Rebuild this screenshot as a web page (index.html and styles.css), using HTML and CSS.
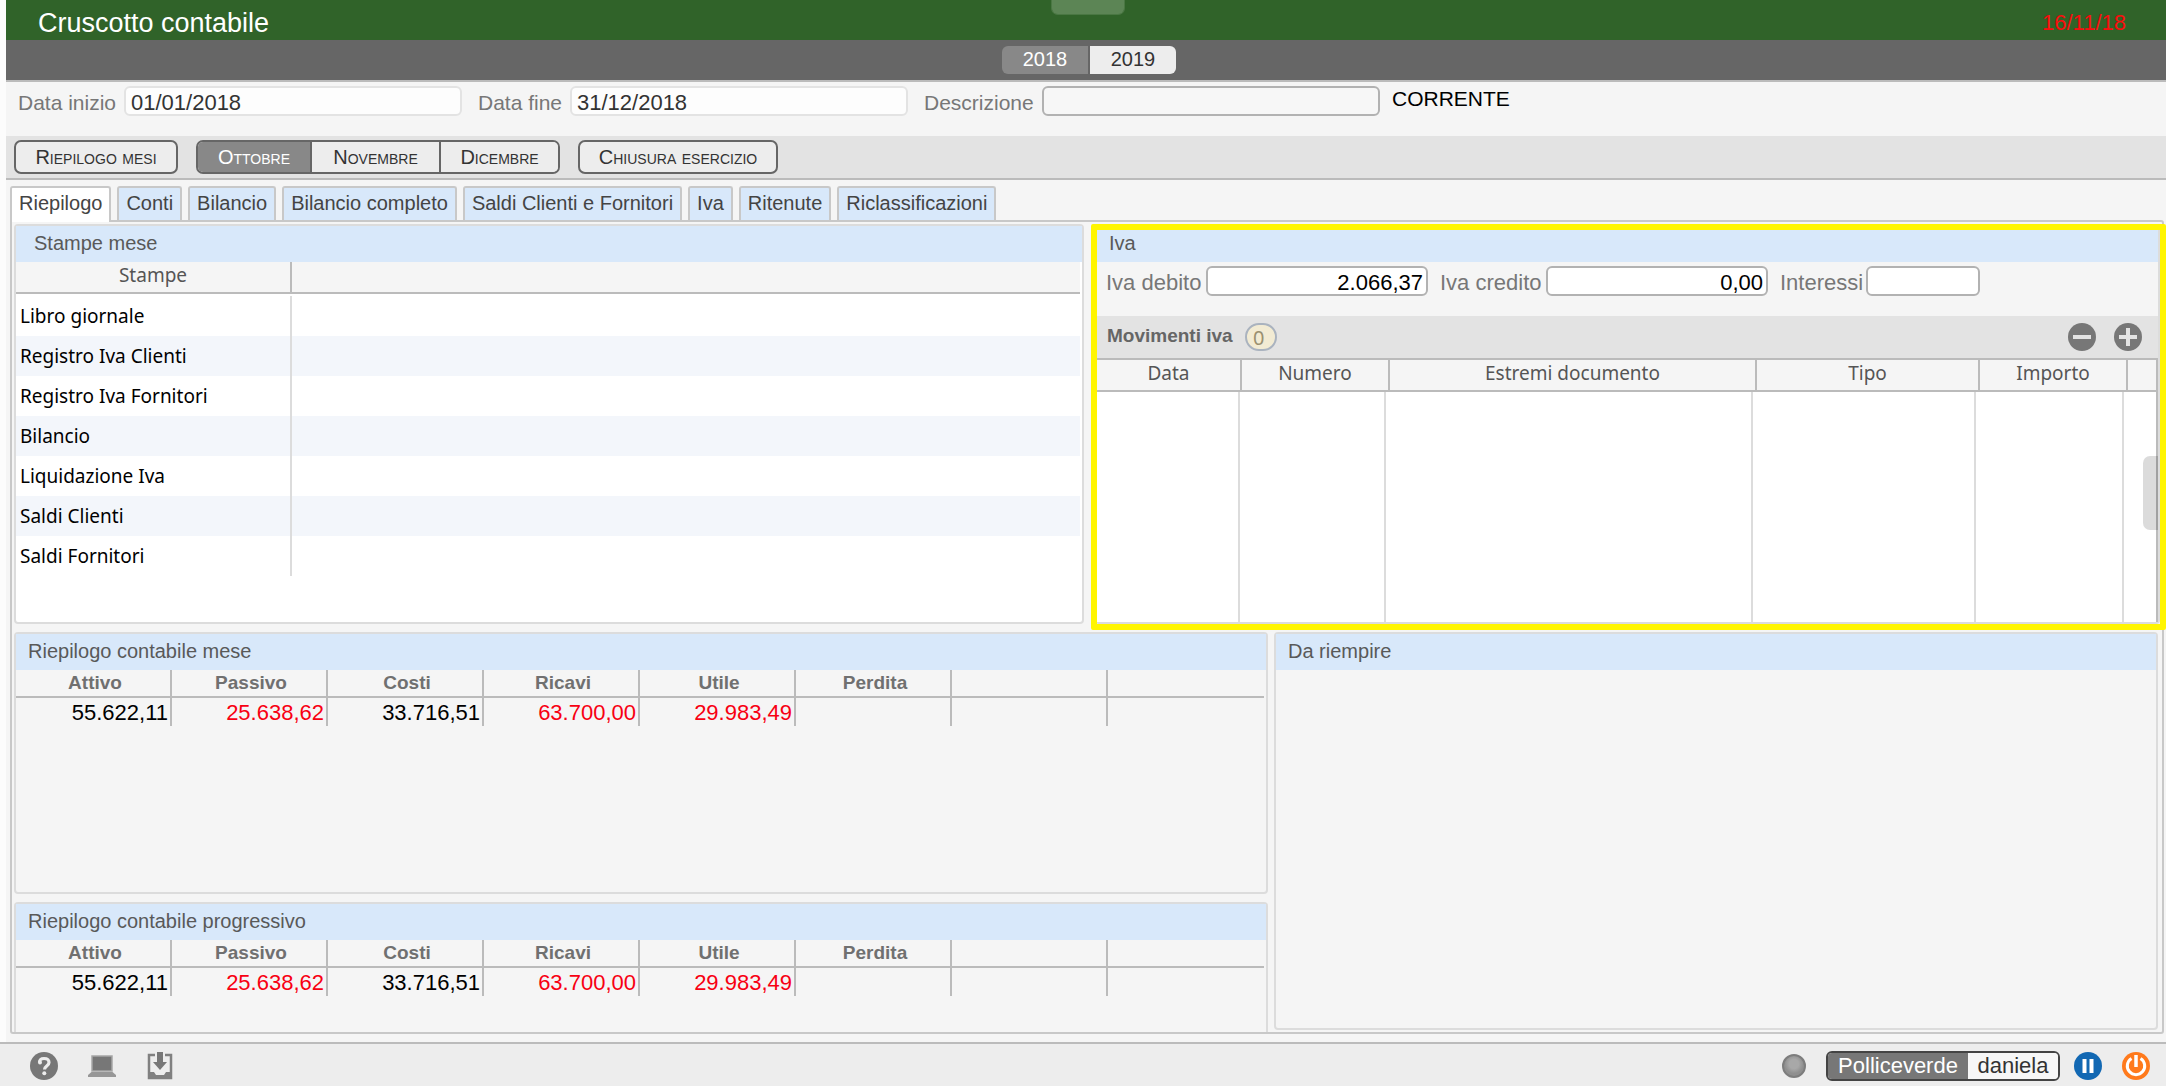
FILE: index.html
```
<!DOCTYPE html>
<html lang="it">
<head>
    <meta charset="UTF-8">
    <meta name="viewport" content="width=device-width, initial-scale=1.0">
    <title>Cruscotto contabile</title>
    <link rel="stylesheet" href="styles.css">
</head>
<body>

    <div class="finestra">
        <header class="testata">
            <h1>Cruscotto contabile</h1>
            <span class="data-oggi">16/11/18</span>
            <span class="maniglia maniglia-alto"></span>
        </header>

        <nav class="anni">
            <button class="anno attivo">2018</button>
            <button class="anno">2019</button>
        </nav>

        <form class="periodo">
            <label class="etichetta w-inizio" for="dataInizio">Data inizio</label>
            <input class="campo campo-chiaro" id="dataInizio" type="text" value="01/01/2018">
            <label class="etichetta w-fine" for="dataFine">Data fine</label>
            <input class="campo campo-chiaro" id="dataFine" type="text" value="31/12/2018">
            <label class="etichetta w-descrizione" for="descrizione">Descrizione</label>
            <input class="campo campo-vuoto" id="descrizione" type="text">
            <span class="stato">CORRENTE</span>
        </form>

        <div class="barra-mesi">
            <button class="mese singolo riepilogo-mesi">Riepilogo mesi</button>
            <div class="gruppo-mesi">
                <button class="mese ottobre attivo">Ottobre</button>
                <button class="mese novembre">Novembre</button>
                <button class="mese dicembre">Dicembre</button>
            </div>
            <button class="mese singolo chiusura">Chiusura esercizio</button>
        </div>

        <nav class="schede">
            <button class="scheda attiva">Riepilogo</button>
            <button class="scheda">Conti</button>
            <button class="scheda">Bilancio</button>
            <button class="scheda">Bilancio completo</button>
            <button class="scheda">Saldi Clienti e Fornitori</button>
            <button class="scheda">Iva</button>
            <button class="scheda">Ritenute</button>
            <button class="scheda">Riclassificazioni</button>
        </nav>

        <main class="contenuto">
            <div class="riga-alta">
                <section class="pannello stampe">
                    <h2 class="rientrato">Stampe mese</h2>
                    <table class="tabella-stampe">
                        <colgroup>
                            <col class="col-stampe">
                            <col>
                        </colgroup>
                        <thead>
                            <tr><th>Stampe</th><th></th></tr>
                        </thead>
                        <tbody>
                            <tr><td>Libro giornale</td><td></td></tr>
                            <tr><td>Registro Iva Clienti</td><td></td></tr>
                            <tr><td>Registro Iva Fornitori</td><td></td></tr>
                            <tr><td>Bilancio</td><td></td></tr>
                            <tr><td>Liquidazione Iva</td><td></td></tr>
                            <tr><td>Saldi Clienti</td><td></td></tr>
                            <tr><td>Saldi Fornitori</td><td></td></tr>
                        </tbody>
                    </table>
                </section>

                <section class="pannello iva">
                    <h2>Iva</h2>
                    <form class="importi-iva">
                        <label class="etichetta w-debito" for="ivaDebito">Iva debito</label>
                        <input class="campo campo-importo" id="ivaDebito" type="text" value="2.066,37">
                        <label class="etichetta w-credito" for="ivaCredito">Iva credito</label>
                        <input class="campo campo-importo" id="ivaCredito" type="text" value="0,00">
                        <label class="etichetta w-interessi" for="interessi">Interessi</label>
                        <input class="campo campo-importo corto" id="interessi" type="text">
                    </form>
                    <div class="barra-movimenti">
                        <h3>Movimenti iva</h3>
                        <span class="contatore">0</span>
                        <button class="icona togli" aria-label="Togli">
                            <svg width="28" height="28" viewBox="0 0 28 28">
                                <circle cx="14" cy="14" r="14" fill="#777"/>
                                <path d="M5 14h18" stroke="#e3e3e3" stroke-width="4"/>
                            </svg>
                        </button>
                        <button class="icona" aria-label="Aggiungi">
                            <svg width="28" height="28" viewBox="0 0 28 28">
                                <circle cx="14" cy="14" r="14" fill="#777"/>
                                <path d="M5 14h18M14 5v18" stroke="#e3e3e3" stroke-width="4"/>
                            </svg>
                        </button>
                    </div>
                    <table class="tabella-iva">
                        <colgroup>
                            <col class="c-data">
                            <col class="c-numero">
                            <col>
                            <col class="c-tipo">
                            <col class="c-importo">
                            <col class="c-fine">
                        </colgroup>
                        <thead>
                            <tr>
                                <th>Data</th>
                                <th>Numero</th>
                                <th>Estremi documento</th>
                                <th>Tipo</th>
                                <th>Importo</th>
                                <th></th>
                            </tr>
                        </thead>
                    </table>
                    <!-- corpo vuoto: solo le linee delle colonne -->
                    <div class="colonne-vuote">
                        <span></span><span></span><span></span><span></span><span></span>
                    </div>
                    <span class="maniglia maniglia-destra"></span>
                    <span class="evidenza"></span>
                </section>
            </div>

            <div class="riga-bassa">
                <div class="riepiloghi">
                    <section class="pannello">
                        <h2>Riepilogo contabile mese</h2>
                        <table class="tabella-saldi">
                            <thead>
                                <tr><th>Attivo</th><th>Passivo</th><th>Costi</th><th>Ricavi</th><th>Utile</th><th>Perdita</th><th></th><th></th></tr>
                            </thead>
                            <tbody>
                                <tr>
                                    <td>55.622,11</td>
                                    <td class="rosso">25.638,62</td>
                                    <td>33.716,51</td>
                                    <td class="rosso">63.700,00</td>
                                    <td class="rosso">29.983,49</td>
                                    <td></td><td></td><td></td>
                                </tr>
                            </tbody>
                        </table>
                    </section>
                    <section class="pannello aperto">
                        <h2>Riepilogo contabile progressivo</h2>
                        <table class="tabella-saldi">
                            <thead>
                                <tr><th>Attivo</th><th>Passivo</th><th>Costi</th><th>Ricavi</th><th>Utile</th><th>Perdita</th><th></th><th></th></tr>
                            </thead>
                            <tbody>
                                <tr>
                                    <td>55.622,11</td>
                                    <td class="rosso">25.638,62</td>
                                    <td>33.716,51</td>
                                    <td class="rosso">63.700,00</td>
                                    <td class="rosso">29.983,49</td>
                                    <td></td><td></td><td></td>
                                </tr>
                            </tbody>
                        </table>
                    </section>
                </div>
                <section class="pannello riempire">
                    <h2>Da riempire</h2>
                </section>
            </div>
        </main>
    </div>

    <footer class="piede">
        <button class="icona" aria-label="Aiuto">
            <svg width="28" height="28" viewBox="0 0 28 28">
                <circle cx="14" cy="14" r="14" fill="#777"/>
                <path d="M9.500 10.500C9.500 7.500 11.500 6.500 14 6.500c3 0 5 1.500 5 4 0 3.500-4.500 3.500-4.500 7" fill="none" stroke="#ededed" stroke-width="3.200"/>
                <circle cx="10" cy="10.500" r="2" fill="#ededed"/>
                <circle cx="14.300" cy="21.300" r="2" fill="#ededed"/>
            </svg>
        </button>
        <button class="icona" aria-label="Postazione">
            <svg width="28" height="28" viewBox="0 0 28 28">
                <rect x="4" y="4" width="20" height="15" fill="#777" stroke="#a6a6a6" stroke-width="1.500"/>
                <path d="M3.500 20h21l3.500 3v2H0v-2z" fill="#979797"/>
            </svg>
        </button>
        <button class="icona" aria-label="Scarica">
            <svg width="28" height="28" viewBox="0 0 28 28">
                <path d="M9 3H3v23h22V3h-6" fill="none" stroke="#808080" stroke-width="2.500"/>
                <path d="M3 20h5l2 3h8l2-3h5v6H3z" fill="#808080"/>
                <path d="M11 0h6v10h4l-7 8-7-8h4z" fill="#777"/>
            </svg>
        </button>

        <span class="spia"></span>
        <div class="utente">
            <span class="azienda">Polliceverde</span>
            <span class="nome">daniela</span>
        </div>
        <button class="icona" aria-label="Pausa">
            <svg width="28" height="28" viewBox="0 0 28 28">
                <circle cx="14" cy="14" r="14" fill="#1268b3"/>
                <path d="M10.500 7v14M17.500 7v14" stroke="#fff" stroke-width="4"/>
            </svg>
        </button>
        <button class="icona esci" aria-label="Esci">
            <svg width="28" height="28" viewBox="0 0 28 28">
                <circle cx="14" cy="14" r="14" fill="#ff7a1c"/>
                <path d="M9.500 6.500a8.700 8.700 0 1 0 9 0" fill="none" stroke="#fff" stroke-width="3"/>
                <path d="M14 3v12" stroke="#fff" stroke-width="3.500"/>
            </svg>
        </button>
    </footer>

</body>
</html>
```
FILE: styles.css
```
* {
    box-sizing: border-box;
}
body {
    margin: 0;
    min-height: 100vh;
    display: flex;
    flex-direction: column;
    background-color: #fcfcfc;
    font-family: "Liberation Sans", Arial, sans-serif;
    font-size: 20px;
    color: #333;
}
h1, h2, h3 {
    margin: 0;
    font-weight: normal;
}
button {
    margin: 0;
    padding: 0;
    border: none;
    background: none;
    font-family: inherit;
    font-size: 20px;
    color: #333;
    cursor: pointer;
}
table {
    border-collapse: separate;
    border-spacing: 0;
    table-layout: fixed;
}
.finestra {
    flex: 1;
    display: flex;
    flex-direction: column;
    margin-left: 6px;
    background-color: #f5f5f5;
}

/* Testata verde */
.testata {
    position: relative;
    display: flex;
    justify-content: space-between;
    align-items: center;
    height: 40px;
    padding: 6px 40px 0 32px;
    background-color: #306329;
}
.testata h1 {
    font-size: 27px;
    line-height: 34px;
    color: #fff;
}
.data-oggi {
    font-size: 22px;
    color: #f90d0d;
}
.maniglia {
    position: absolute;
}
.maniglia-alto {
    top: 0;
    left: calc(50% - 35px);
    width: 74px;
    height: 15px;
    background-color: #5c8555;
    border: 1px solid #4a7743;
    border-top: none;
    border-radius: 0 0 7px 7px;
}

/* Scelta anno */
.anni {
    display: flex;
    justify-content: center;
    gap: 2px;
    height: 42px;
    padding: 6px 0 6px 6px;
    background-color: #666;
    border-bottom: 2px solid #bbb;
}
.anno {
    width: 86px;
    height: 28px;
    padding-bottom: 2px;
    background-color: #ededed;
    border-radius: 0 6px 6px 0;
}
.anno.attivo {
    background-color: #888;
    color: #fff;
    border-radius: 6px 0 0 6px;
}

/* Periodo */
.periodo {
    display: flex;
    height: 54px;
    padding: 4px 12px 0;
}
.etichetta {
    font-size: 22px;
    line-height: 33px;
    color: #777;
    white-space: nowrap;
}
.periodo .etichetta {
    font-size: 21px;
}
.w-inizio { width: 106px; }
.w-fine { width: 92px; }
.w-descrizione { width: 118px; }
.w-debito { width: 100px; }
.w-credito { width: 106px; }
.w-interessi { width: 86px; }
.campo {
    width: 338px;
    height: 30px;
    margin-right: 16px;
    padding: 3px 5px 0;
    background-color: #fdfdfd;
    border: 2px solid #b2b2b2;
    border-radius: 6px;
    font-family: inherit;
    font-size: 22px;
    color: #333;
}
.campo-chiaro {
    border-color: #e3e3e3;
}
.campo-vuoto {
    margin-right: 12px;
    background-color: #f7f7f7;
}
.stato {
    font-size: 21px;
    line-height: 26px;
    color: #000;
}

/* Mesi */
.barra-mesi {
    display: flex;
    gap: 18px;
    height: 44px;
    padding: 4px 8px;
    background-color: #e3e3e3;
    border-bottom: 2px solid #bbb;
}
.mese {
    height: 34px;
    padding-top: 1px;
    background-color: #ededed;
    font-size: 20px;
    font-variant: small-caps;
}
.singolo, .gruppo-mesi {
    border: 2px solid #666;
    border-radius: 7px;
}
.riepilogo-mesi { width: 164px; }
.chiusura { width: 200px; }
.gruppo-mesi {
    display: flex;
    height: 34px;
    overflow: hidden;
}
.gruppo-mesi .mese {
    height: 30px;
}
.gruppo-mesi .mese + .mese {
    border-left: 2px solid #666;
}
.ottobre { width: 112px; }
.novembre { width: 129px; }
.dicembre { width: 119px; }
.mese.attivo {
    background-color: #888;
    color: #fff;
}

/* Schede */
.schede {
    display: flex;
    gap: 6px;
    padding: 6px 4px 0;
    position: relative;
}
.scheda {
    height: 34px;
    padding: 0 7px 2px;
    background-color: #d8e8fa;
    border: 2px solid #c8c8c8;
    border-bottom: none;
    border-radius: 3px 3px 0 0;
    color: #444;
}
.scheda.attiva {
    height: 36px;
    margin-bottom: -2px;
    padding-bottom: 4px;
    background-color: #fff;
    z-index: 1;
}

/* Contenuto */
.contenuto {
    flex: 1;
    display: flex;
    flex-direction: column;
    gap: 8px;
    margin: 0 2px 8px 4px;
    padding: 2px 2px 0;
    border: 2px solid #c8c8c8;
    border-radius: 0 3px 3px 3px;
}
.riga-alta {
    display: grid;
    grid-template-columns: 1070fr 1065fr;
    gap: 11px;
    height: 400px;
}
.riga-bassa {
    flex: 1;
    display: grid;
    grid-template-columns: 1254fr 886fr;
    gap: 6px;
}
.riepiloghi {
    display: grid;
    grid-template-rows: 262px 1fr;
    gap: 8px;
}
.pannello {
    border: 2px solid #dcdcdc;
    border-radius: 4px;
}
.pannello h2 {
    height: 36px;
    padding-left: 12px;
    background-color: #d8e8fa;
    font-size: 20px;
    line-height: 34px;
    color: #595959;
}
.pannello h2.rientrato {
    padding-left: 18px;
}
.aperto {
    border-bottom: none;
    border-radius: 4px 4px 0 0;
}
.riempire {
    margin: 0 2px 2px 0;
}

/* Stampe */
.stampe {
    background-color: #fff;
}
.tabella-stampe {
    width: calc(100% - 2px);
}
.col-stampe {
    width: 276px;
}
.tabella-stampe th, .tabella-iva th {
    height: 32px;
    padding: 0 0 4px;
    background-color: #f5f5f5;
    border-bottom: 2px solid #bbb;
    font-family: "Noto Sans", sans-serif;
    font-size: 19px;
    font-weight: normal;
    line-height: 26px;
    color: #555;
}
.tabella-stampe th:first-child, .tabella-iva th {
    border-right: 2px solid #bbb;
}
.tabella-stampe tbody::before {
    content: "";
    display: block;
    height: 2px;
}
.tabella-stampe td {
    height: 40px;
    padding: 0 4px;
    font-family: "Noto Sans", sans-serif;
    font-size: 19px;
    line-height: 26px;
    color: #000;
}
.tabella-stampe td:first-child {
    border-right: 2px solid #dcdcdc;
}
.tabella-stampe tbody tr:nth-child(even) {
    background-color: #f3f6fb;
}

/* Iva */
.iva {
    position: relative;
    display: flex;
    flex-direction: column;
}
.importi-iva {
    display: flex;
    height: 54px;
    padding: 4px 9px 0;
}
.campo-importo {
    width: 222px;
    margin-right: 12px;
    padding: 3px 3px 0;
    background-color: #fff;
    color: #000;
    text-align: right;
}
.corto {
    width: 114px;
}
.barra-movimenti {
    display: flex;
    align-items: center;
    gap: 18px;
    height: 44px;
    padding: 0 16px 0 10px;
    background-color: #e3e3e3;
    border-bottom: 2px solid #bbb;
}
.barra-movimenti h3 {
    margin-right: -6px;
    padding-bottom: 2px;
    font-size: 19px;
    font-weight: bold;
    color: #666;
}
.contatore {
    width: 32px;
    height: 28px;
    padding-right: 4px;
    background-color: #f2ebd3;
    border: 2px solid #aab3bf;
    border-radius: 14px;
    font-family: "Noto Sans", sans-serif;
    line-height: 25px;
    text-align: center;
    color: #9a9070;
}
.icona {
    display: block;
    width: 28px;
    height: 28px;
}
.icona svg {
    display: block;
}
.togli {
    margin-left: auto;
}
.tabella-iva {
    width: 100%;
}
.c-data { width: 145px; }
.c-numero { width: 148px; }
.c-tipo { width: 223px; }
.c-importo { width: 148px; }
.c-fine { width: 30px; }
.colonne-vuote {
    flex: 1;
    display: grid;
    grid-template-columns: 143px 146px 1fr 223px 148px;
    padding-right: 32px;
    background-color: #fff;
    border-right: 2px solid #bbb;
}
.colonne-vuote span {
    border-right: 2px solid #dcdcdc;
}
.maniglia-destra {
    top: 230px;
    right: 0;
    width: 15px;
    height: 74px;
    background-color: rgba(0, 0, 0, 0.14);
    border-radius: 7px 0 0 7px;
}
/* Riquadro giallo intorno al pannello */
.evidenza {
    position: absolute;
    top: -2px;
    right: -8px;
    bottom: -8px;
    left: -6px;
    border: 6px solid #fff500;
    border-radius: 2px;
    pointer-events: none;
}

/* Saldi */
.tabella-saldi {
    width: calc(100% - 2px);
}
.tabella-saldi th, .tabella-saldi td {
    height: 28px;
    padding: 0;
    border-right: 2px solid #bbb;
}
.tabella-saldi th {
    padding-left: 4px;
    border-bottom: 2px solid #bbb;
    font-size: 19px;
    line-height: 26px;
    color: #707070;
}
.tabella-saldi td {
    padding: 2px 2px 0 0;
    font-size: 22px;
    line-height: 26px;
    text-align: right;
    color: #000;
}
.tabella-saldi th:last-child, .tabella-saldi td:last-child {
    border-right: none;
}
.tabella-saldi td.rosso {
    color: #f80012;
}

/* Piede */
.piede {
    display: flex;
    align-items: center;
    gap: 30px;
    height: 44px;
    padding: 2px 16px 0 30px;
    background-color: #ededed;
    border-top: 2px solid #bbb;
}
.spia {
    width: 24px;
    height: 24px;
    margin-left: auto;
    margin-right: -10px;
    background: radial-gradient(circle at 50% 40%, #a8a8a8 30%, #8f8f8f 60%);
    border: 2px solid #7d7d7d;
    border-radius: 50%;
}
.utente {
    display: flex;
    height: 30px;
    margin-right: -16px;
    border: 2px solid #444;
    border-radius: 6px;
    overflow: hidden;
    font-size: 22px;
    line-height: 25px;
}
.azienda {
    width: 140px;
    background-color: #777;
    color: #fff;
    text-align: center;
}
.nome {
    width: 90px;
    background-color: #f7f7f7;
    text-align: center;
}
.esci {
    margin-left: -10px;
}
```
